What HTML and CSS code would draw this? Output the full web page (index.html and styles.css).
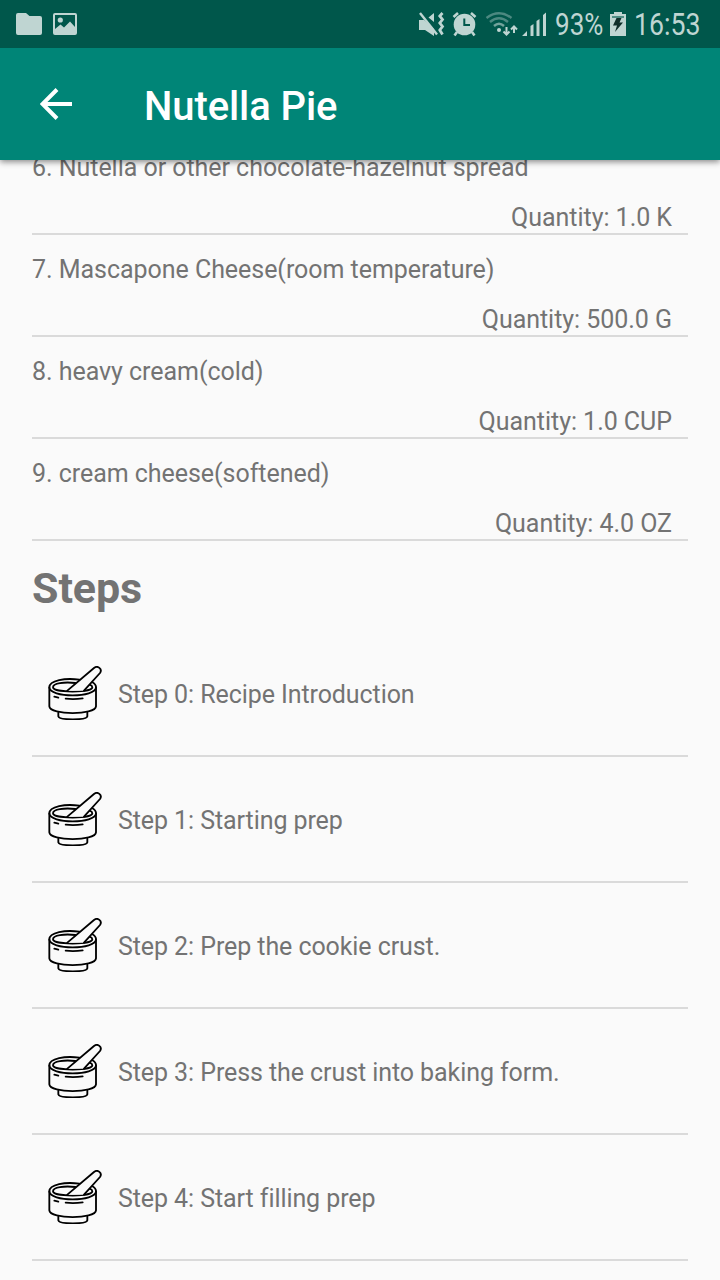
FILE: index.html
```html
<!DOCTYPE html>
<html lang="en">
<head>
<meta charset="utf-8">
<title>Nutella Pie</title>
<link rel="stylesheet" href="styles.css">
</head>
<body>
<svg class="defs" aria-hidden="true">
  <symbol id="mortar" viewBox="24 33 162 162">
    <g fill="none" stroke="#000" stroke-width="5.5" stroke-linecap="round" stroke-linejoin="round">
      <path d="M28 97V154C30 181 166 181 168 154V97"/>
      <path d="M118 74C76 68 28 76 28 97C28 129 168 129 168 97C168 90 164 85 156 81"/>
      <path d="M106 84C72 80 39 85 39 97C39 114 157 114 157 97C157 93 154 91 149 89"/>
      <path fill="#fafafa" d="M82 107L162 39C173 30 188 42 180 54L132 107"/>
      <path d="M55 173V184C57 196 140 196 142 184V173"/>
      <path d="M43 125L55 128M77 131Q102 134 128 130"/>
    </g>
  </symbol>
</svg>
<div class="screen">
  <div class="status">
    <svg class="status-left" viewBox="0 0 120 48">
      <path d="M18 13H26L29.500 16H40Q42 16 42 18V33Q42 35 40 35H18Q16 35 16 33V15Q16 13 18 13Z"/>
      <path fill-rule="evenodd" d="M55 13H75Q77 13 77 15V33Q77 35 75 35H55Q53 35 53 33V15Q53 13 55 13ZM55 15V29L60.500 24.500L64 27.500L70 21.500L75 27V15Z"/>
      <circle cx="60.300" cy="20" r="2.600"/>
    </svg>
    <svg class="status-signals" viewBox="410 0 140 48">
      <path d="M419 20H424L434 29V36L425 30H419ZM434 13V22L428.500 17.500Z"/>
      <path class="line" stroke-width="2.400" d="M420 13L437 34.500"/>
      <path class="line" stroke-width="2.800" d="M442.500 13L439.800 16L442.500 19.500L439.800 23L442.500 26.500L439.800 30L442.500 34.500"/>
      <circle cx="464.500" cy="24.500" r="10.800"/>
      <path class="line" stroke-width="2.600" d="M453.500 17L458 13M475.500 17L471 13M457 32L454.500 35.500M472 32L474.500 35.500"/>
      <path class="cut" d="M464.300 18.500V25H470"/>
      <g class="line" stroke-width="2.400">
        <path opacity=".4" d="M486.500 18Q499 8.500 511.500 18"/>
        <path opacity=".4" d="M490 22Q499 14.500 508 22"/>
        <path opacity=".6" d="M494 26Q499 21.500 504 26"/>
        <path stroke-width="2" d="M506.500 27V34M503.500 31.500L506.500 34.500L509.500 31.500M514 33V27M511 29.500L514 26.500L517 29.500"/>
      </g>
      <circle cx="499" cy="30" r="2"/>
      <path d="M522 36L527 31V36ZM530.500 36V26L533.500 24V36ZM536.500 36V21L539.500 19V36ZM543 36V15L546 12.500V36Z"/>
    </svg>
    <span class="percent"><span>93%</span></span>
    <svg class="battery" viewBox="610 0 16 48">
      <path d="M614 12H622V14H626V36H610V14H614Z"/>
      <path fill="#4e8d84" d="M612 16H624V18H612Z"/>
      <path fill="#102f2b" d="M616.500 18H621.500L619.500 22.500H623L615 32L617 25.500H613Z"/>
    </svg>
    <span class="clock"><span>16:53</span></span>
  </div>
  <header class="appbar">
    <svg class="back" viewBox="0 0 32 32"><path d="M32 16H3M17 1.500L2.500 16L17 30.500"/></svg>
    <h1>Nutella Pie</h1>
  </header>
  <main>
    <ul class="ingredients">
      <li><p>6. Nutella or other chocolate-hazelnut spread</p><p class="quantity">Quantity: 1.0 K</p></li>
      <li><p>7. Mascapone Cheese(room temperature)</p><p class="quantity">Quantity: 500.0 G</p></li>
      <li><p>8. heavy cream(cold)</p><p class="quantity">Quantity: 1.0 CUP</p></li>
      <li><p>9. cream cheese(softened)</p><p class="quantity">Quantity: 4.0 OZ</p></li>
    </ul>
    <h2>Steps</h2>
    <ul class="steps">
      <li><svg><use href="#mortar"/></svg><span>Step 0: Recipe Introduction</span></li>
      <li><svg><use href="#mortar"/></svg><span>Step 1: Starting prep</span></li>
      <li><svg><use href="#mortar"/></svg><span>Step 2: Prep the cookie crust.</span></li>
      <li><svg><use href="#mortar"/></svg><span>Step 3: Press the crust into baking form.</span></li>
      <li><svg><use href="#mortar"/></svg><span>Step 4: Start filling prep</span></li>
    </ul>
  </main>
</div>
</body>
</html>
```

FILE: styles.css
```css
* { box-sizing: border-box; margin: 0; padding: 0; }
body { background: #fafafa; font-family: Roboto, sans-serif; color: #737373; }
.defs { display: none; }
.screen { width: 720px; height: 1280px; overflow: hidden; display: flex; flex-direction: column; }
.status { flex: none; height: 48px; background: #00574b; color: #bfd5d2; display: flex; position: relative; z-index: 2; }
.status svg { height: 48px; fill: #bfd5d2; flex: none; }
.status .status-left { width: 120px; margin-right: 290px; }
.status .status-signals { width: 140px; }
.status .line { fill: none; stroke: #bfd5d2; }
.status .cut { fill: none; stroke: #00574b; stroke-width: 2; }
.status .battery { width: 16px; }
.percent, .clock { font-size: 31px; line-height: 50px; height: 48px; white-space: nowrap; }
.percent span, .clock span { display: inline-block; transform-origin: left center; }
.percent { width: 60px; padding-left: 5px; }
.percent span { transform: scaleX(.84); }
.clock { width: 94px; padding-left: 8px; }
.clock span { transform: scaleX(.86); }
.appbar { flex: none; height: 112px; background: #008577; display: flex; align-items: center; padding-left: 40px; position: relative; z-index: 1; box-shadow: 0 2px 6px rgba(0, 0, 0, .45); }
.back { width: 32px; height: 32px; fill: none; stroke: #fff; stroke-width: 4; }
.appbar h1 { margin-left: 72px; padding-top: 6px; font-size: 40px; font-weight: 500; letter-spacing: -.1px; color: #fff; line-height: 46px; }
main { padding: 0 32px; margin-top: -27px; }
ul { list-style: none; }
.ingredients li { height: 102px; border-bottom: 2px solid #dadada; padding-top: 20px; font-size: 25px; letter-spacing: -.04px; line-height: 30px; }
.quantity { margin-top: 20px; padding-right: 16px; text-align: right; }
h2 { height: 90px; padding-top: 21px; font-size: 43px; line-height: 52px; font-weight: 700; letter-spacing: -.1px; }
.steps li { height: 126px; border-bottom: 2px solid #dadada; display: flex; align-items: center; gap: 16px; padding-left: 16px; font-size: 25px; letter-spacing: -.08px; }
.steps svg { width: 54px; height: 54px; }
.steps span { line-height: 30px; padding-top: 4px; }
```
